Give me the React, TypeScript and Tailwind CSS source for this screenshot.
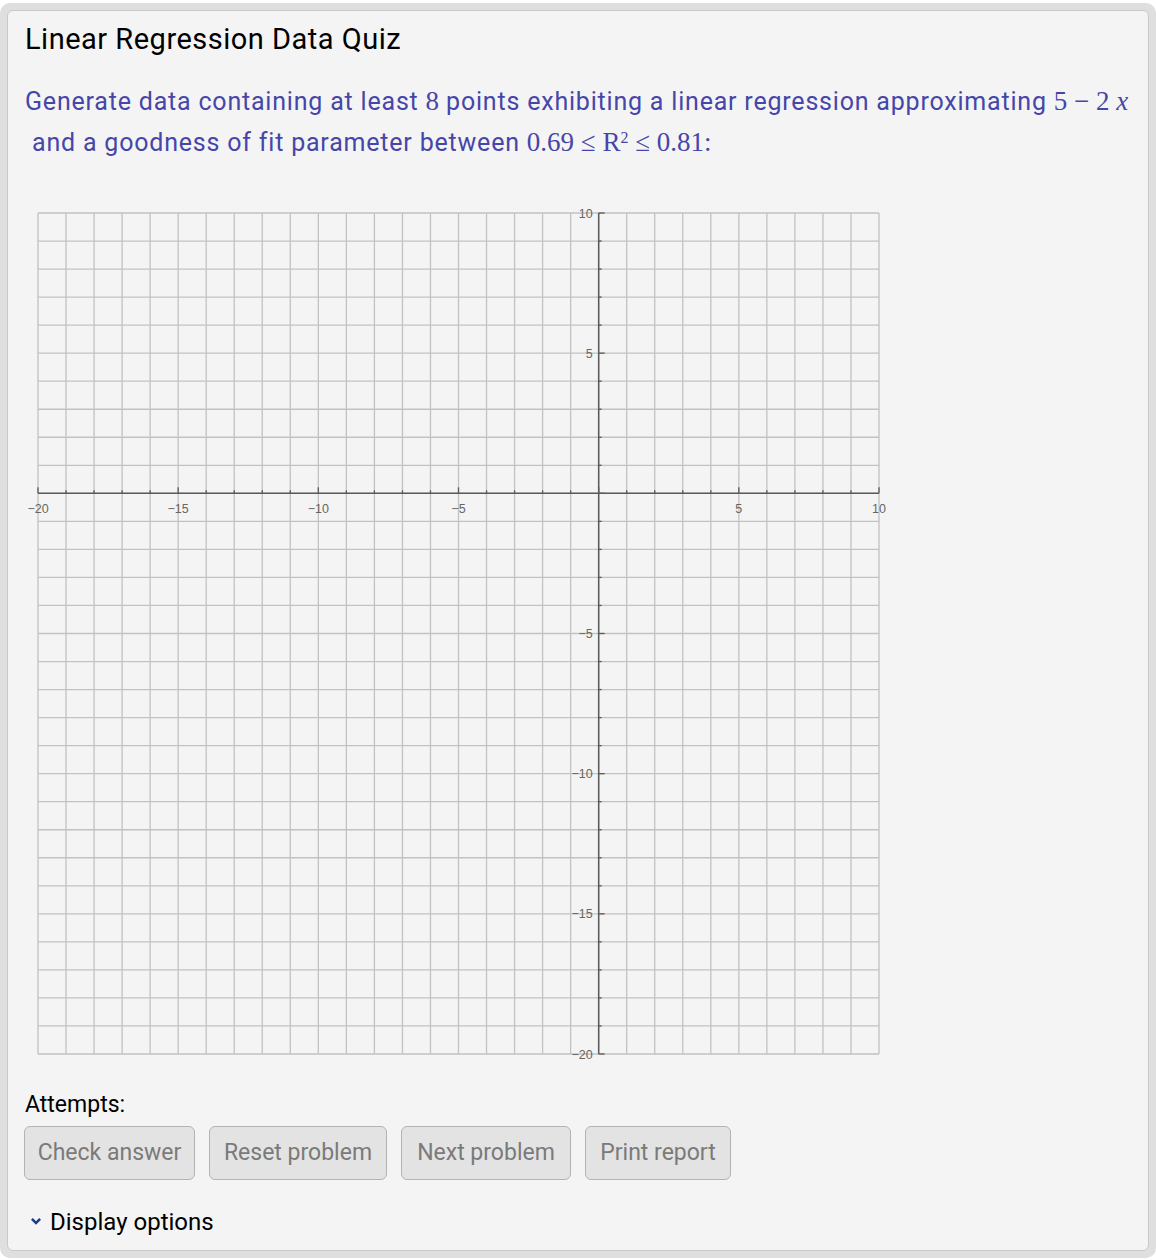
import React from "react";

const PX = 841 / 30;
const X = (u: number) => 13 + (u + 20) * PX;
const Y = (v: number) => 13 + (10 - v) * PX;

function Grid() {
  const xs = Array.from({ length: 31 }, (_, i) => i - 20);
  const ys = Array.from({ length: 31 }, (_, i) => 10 - i);
  const label = "font-['Liberation_Sans',Arial,sans-serif]";
  return (
    <svg width={880} height={870} className="block">
      {xs.map((u) => (
        <line key={"gx" + u} x1={X(u)} x2={X(u)} y1={Y(10)} y2={Y(-20)} stroke="#c2c2c2" strokeWidth={1.3} />
      ))}
      {ys.map((v) => (
        <line key={"gy" + v} x1={X(-20)} x2={X(10)} y1={Y(v)} y2={Y(v)} stroke="#c2c2c2" strokeWidth={1.3} />
      ))}
      {/* axes */}
      <line x1={X(-20)} x2={X(10)} y1={Y(0)} y2={Y(0)} stroke="#5a5a5a" strokeWidth={1.5} />
      <line x1={X(0)} x2={X(0)} y1={Y(10)} y2={Y(-20)} stroke="#5a5a5a" strokeWidth={1.5} />
      {xs.map((u) => (
        <line key={"tx" + u} x1={X(u)} x2={X(u)} y1={Y(0)} y2={Y(0) - (u % 5 === 0 ? 6 : 3)} stroke="#5a5a5a" strokeWidth={1.3} />
      ))}
      {ys.map((v) => (
        <line key={"ty" + v} x1={X(0)} x2={X(0) + (v % 5 === 0 ? 6 : 3)} y1={Y(v)} y2={Y(v)} stroke="#5a5a5a" strokeWidth={1.3} />
      ))}
      {[-20, -15, -10, -5, 5, 10].map((u) => (
        <text key={"lx" + u} x={X(u)} y={Y(0) + 20} textAnchor="middle" fontSize={12.5} fill="#666" className={label}>
          {u < 0 ? "\u2212" + -u : u}
        </text>
      ))}
      {[10, 5, -5, -10, -15, -20].map((v) => (
        <text key={"ly" + v} x={X(0) - 6} y={Y(v) + 4.5} textAnchor="end" fontSize={12.5} fill="#666" className={label}>
          {v < 0 ? "\u2212" + -v : v}
        </text>
      ))}
    </svg>
  );
}

const buttons = [
  { label: "Check answer", w: "w-[171px]" },
  { label: "Reset problem", w: "w-[178px]" },
  { label: "Next problem", w: "w-[170px]" },
  { label: "Print report", w: "w-[146px]" },
];

export default function App() {
  const serif = "font-['Liberation_Serif','Times_New_Roman',serif] text-[27px] tracking-normal";
  return (
    <div className="w-[1156px] h-[1260px] bg-white pt-[3px] font-['Roboto',Arial,sans-serif]">
      <div className="h-[1255px] rounded-[10px] bg-[#dfdfdf] p-[7px]">
        <div className="h-full rounded-[6px] border border-[#c9c9c9] bg-[#f4f4f4] pl-[17px] pt-[11px]">
          <h1 className="text-[29px] leading-[34px] tracking-[0.5px] text-black">Linear Regression Data Quiz</h1>

          <p className="mt-[25px] text-[25px] leading-[41px] tracking-[0.8px] text-[#4646a8]">
            Generate data containing at least <span className={serif}>8</span> points exhibiting a linear
            regression approximating <span className={serif}>5 − 2 <i>x</i></span>
            <br />
            &nbsp;and a goodness of fit parameter between{" "}
            <span className={serif}>
              0.69 ≤ R<sup className="text-[16px]">2</sup> ≤ 0.81:
            </span>
          </p>

          <div className="mt-[37px]">
            <Grid />
          </div>

          <div className="mt-[21px] text-[23px] leading-[28px] text-black">Attempts:</div>
          <div className="mt-[7px] -ml-px flex gap-[14px]">
            {buttons.map((b) => (
              <button
                key={b.label}
                className={`${b.w} h-[54px] rounded-[6px] border border-[#b3b3b3] bg-[#e3e3e3] text-[23px] text-[#7a7a7a]`}
              >
                {b.label}
              </button>
            ))}
          </div>

          <div className="mt-[27px] flex items-center gap-[9px] pl-[6px] text-[24px] leading-[30px] text-black">
            <svg width="10" height="8" viewBox="0 0 10 8">
              <path d="M0 1.8 L1.8 0 L5 3.2 L8.2 0 L10 1.8 L5 6.8 Z" fill="#1d3a8c" />
            </svg>
            <span>Display options</span>
          </div>
        </div>
      </div>
    </div>
  );
}
